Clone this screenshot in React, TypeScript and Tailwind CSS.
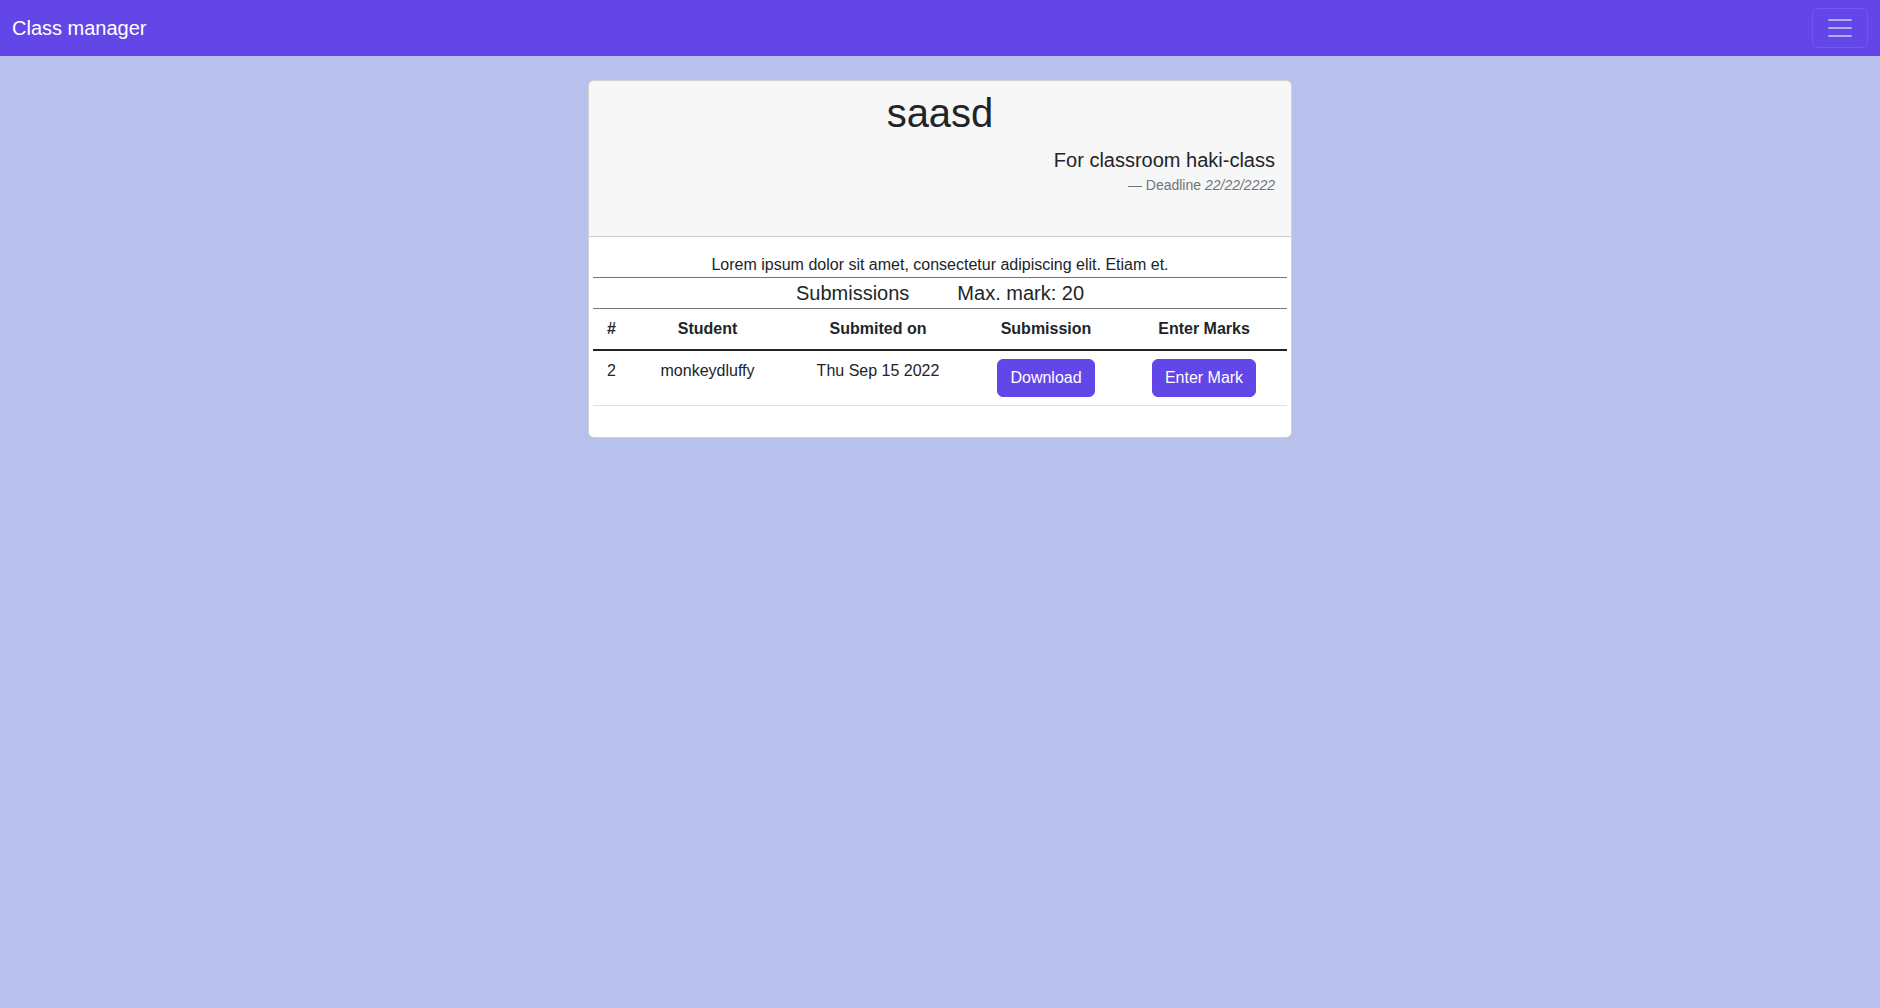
import React from "react";

export default function App() {
  return (
    <div
      className="min-h-screen bg-[#b8c1ec] text-[#212529]"
      style={{ fontFamily: '"Liberation Sans", Arial, sans-serif' }}
    >
      <nav className="h-14 bg-[#6346e8] flex items-center justify-between px-3">
        <span className="text-[20px] leading-[30px] text-white">Class manager</span>
        <button className="w-14 h-10 border border-white/10 rounded-md flex items-center justify-center">
          <svg width="30" height="30" viewBox="0 0 30 30">
            <path
              d="M4 7h22M4 15h22M4 23h22"
              stroke="rgba(255,255,255,0.55)"
              strokeWidth="2"
              strokeLinecap="round"
            />
          </svg>
        </button>
      </nav>

      <div className="flex justify-center pt-6">
        <div className="w-[704px] bg-white border border-black/[.175] rounded-md overflow-hidden">
          <div className="bg-[#f7f7f7] border-b border-black/[.175] px-4 pt-2 pb-2">
            <h1 className="text-[40px] leading-[48px] text-center font-medium mb-2">saasd</h1>
            <div className="text-right">
              <p className="text-[20px] leading-[30px]">For classroom haki-class</p>
              <p className="text-[14px] leading-[21px] text-[#6c757d] mb-8">
                — Deadline <i>22/22/2222</i>
              </p>
            </div>
          </div>

          <div className="px-1 pt-4 pb-[31px]">
            <p className="text-center text-[16px] leading-6 border-b border-[#6c757d]">
              Lorem ipsum dolor sit amet, consectetur adipiscing elit. Etiam et.
            </p>
            <div className="h-[31px] flex justify-center gap-12 text-[20px] leading-[30px] border-b border-[#6c757d]">
              <span>Submissions</span>
              <span>Max. mark: 20</span>
            </div>
            <table className="w-[694px] table-fixed border-collapse text-[16px] leading-6">
              <colgroup>
                <col className="w-[37px]" />
                <col className="w-[155px]" />
                <col className="w-[186px]" />
                <col className="w-[150px]" />
                <col className="w-[166px]" />
              </colgroup>
              <thead>
                <tr className="border-b-2 border-[#212529]">
                  <th className="py-2 text-center font-bold">#</th>
                  <th className="py-2 text-center font-bold">Student</th>
                  <th className="py-2 text-center font-bold">Submited on</th>
                  <th className="py-2 text-center font-bold">Submission</th>
                  <th className="py-2 text-center font-bold">Enter Marks</th>
                </tr>
              </thead>
              <tbody>
                <tr className="border-b border-[#dee2e6]">
                  <td className="py-2 text-center align-top">2</td>
                  <td className="py-2 text-center align-top">monkeydluffy</td>
                  <td className="py-2 text-center align-top">Thu Sep 15 2022</td>
                  <td className="py-2 text-center align-top">
                    <button className="bg-[#6346e8] text-white rounded-md px-3 py-1.5 leading-6 border border-[#6346e8]">
                      Download
                    </button>
                  </td>
                  <td className="py-2 text-center align-top">
                    <button className="bg-[#6346e8] text-white rounded-md px-3 py-1.5 leading-6 border border-[#6346e8]">
                      Enter Mark
                    </button>
                  </td>
                </tr>
              </tbody>
            </table>
          </div>
        </div>
      </div>
    </div>
  );
}
